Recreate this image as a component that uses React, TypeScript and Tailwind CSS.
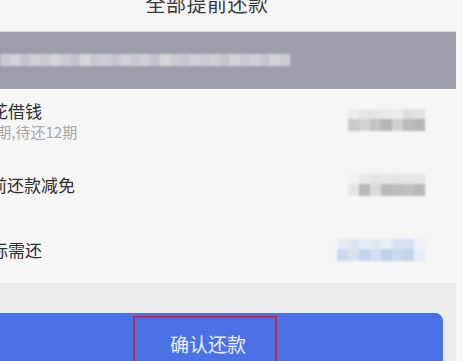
const font = { fontFamily: '"Noto Sans CJK SC", "Noto Sans", sans-serif' };

const bannerBlocks = [
  "#c9cbd3", "#d2d3d9", "#c4c6ce", "#cfd0d6", "#c7c9d0", "#d4d5db", "#cbccd3", "#c2c4cc",
  "#d6d7dc", "#c9cad1", "#cdced5", "#c5c7ce", "#d1d2d8", "#c8c9d0", "#cecfd5", "#c3c5cc",
  "#d5d6db", "#cacbd2", "#c6c8cf", "#d0d1d7", "#c9cbd2", "#cdcfd5", "#c4c6cd", "#d2d3d9",
  "#c8cad1", "#cfd0d6", "#c5c7ce", "#d3d4da", "#cacbd2",
];

type Mosaic = { top: string[]; bottom: string[] };

const values: Mosaic[] = [
  {
    top: ["#ededee", "#e4e4e6", "#e6e6e8", "#e9e9ea", "#ececed", "#dedee0", "#e2e2e4"],
    bottom: ["#cacacd", "#d3d3d5", "#c3c3c6", "#b5b5b8", "#d0d0d2", "#bbbbbe", "#b6b6b9"],
  },
  {
    top: ["#f3f3f4", "#e8e8e9", "#e2e2e4", "#e5e5e7", "#e3e3e5", "#e4e4e6", "#e6e6e8"],
    bottom: ["#e6e6e7", "#b9b9bc", "#dadadc", "#bbbbbe", "#bdbdc0", "#c0c0c3", "#b8b8bb"],
  },
  {
    top: ["#e4eaf4", "#dfe6f2", "#e6ebf4", "#e2e8f3", "#e9eef6", "#d7e1f0", "#d9e2f1", "#eef1f7"],
    bottom: ["#cbdaf0", "#d6e1f2", "#c2d4ee", "#d1ddf1", "#bdd0ec", "#cad9f0", "#c4d5ee", "#e7edf6"],
  },
];

function ValueMosaic({ m }: { m: Mosaic }) {
  return (
    <div className="flex flex-col blur-[0.8px]">
      <div className="flex">
        {m.top.map((c, i) => (
          <div key={i} className="w-[11px] h-[10px]" style={{ background: c }} />
        ))}
      </div>
      <div className="flex">
        {m.bottom.map((c, i) => (
          <div key={i} className="w-[11px] h-[12px]" style={{ background: c }} />
        ))}
      </div>
    </div>
  );
}

export default function App() {
  return (
    <div className="w-[463px] h-[361px] overflow-hidden bg-[#f8f8f8] flex" style={font}>
      <div className="w-[456px] shrink-0 flex flex-col bg-[#f6f6f6]">
        {/* title */}
        <div className="h-[31px] w-[414px] flex justify-center shrink-0">
          <div className="-mt-[6px] text-[20px] leading-[20px] text-[#3a3a3a] tracking-[0.5px]">全部提前还款</div>
        </div>

        {/* notice banner */}
        <div className="h-[58px] shrink-0 bg-[#9c9fab] border-t border-[#dcdde0] flex items-center">
          <div className="flex blur-[0.8px] -mt-[1px]">
            {bannerBlocks.map((c, i) => (
              <div key={i} className="w-[10px] h-[12px]" style={{ background: c }} />
            ))}
          </div>
        </div>

        {/* rows */}
        <div className="flex flex-col text-[#2f2f2f]">
          <div className="h-[62px] flex items-center justify-between pr-[31px]">
            <div className="flex flex-col">
              <div className="-ml-[9px] text-[17px] leading-[22px]">花借钱</div>
              <div className="-ml-[12px] text-[15px] leading-[19px] text-[#a8a8a8]">2期,待还12期</div>
            </div>
            <ValueMosaic m={values[0]} />
          </div>
          <div className="h-[68px] flex items-center justify-between pr-[31px]">
            <div className="-ml-[27px] text-[17px] leading-[22px]">提前还款减免</div>
            <ValueMosaic m={values[1]} />
          </div>
          <div className="h-[62px] flex items-center justify-between pr-[31px]">
            <div className="-ml-[26px] text-[17px] leading-[22px]">实际需还</div>
            <ValueMosaic m={values[2]} />
          </div>
        </div>

        {/* bottom bar */}
        <div className="mt-[2px] flex-1 bg-[#ececec] pt-[30px]">
          <div className="-ml-[20px] w-[463px] h-[60px] rounded-[8px] bg-[#4a72e6] pl-[153px] pt-[3px]">
            <div className="w-[144px] h-[60px] border-2 border-[#c8283c] flex justify-center pt-[16px] pl-[6px]">
              <span className="text-[19px] leading-[19px] text-white/90">确认还款</span>
            </div>
          </div>
        </div>
      </div>
    </div>
  );
}
